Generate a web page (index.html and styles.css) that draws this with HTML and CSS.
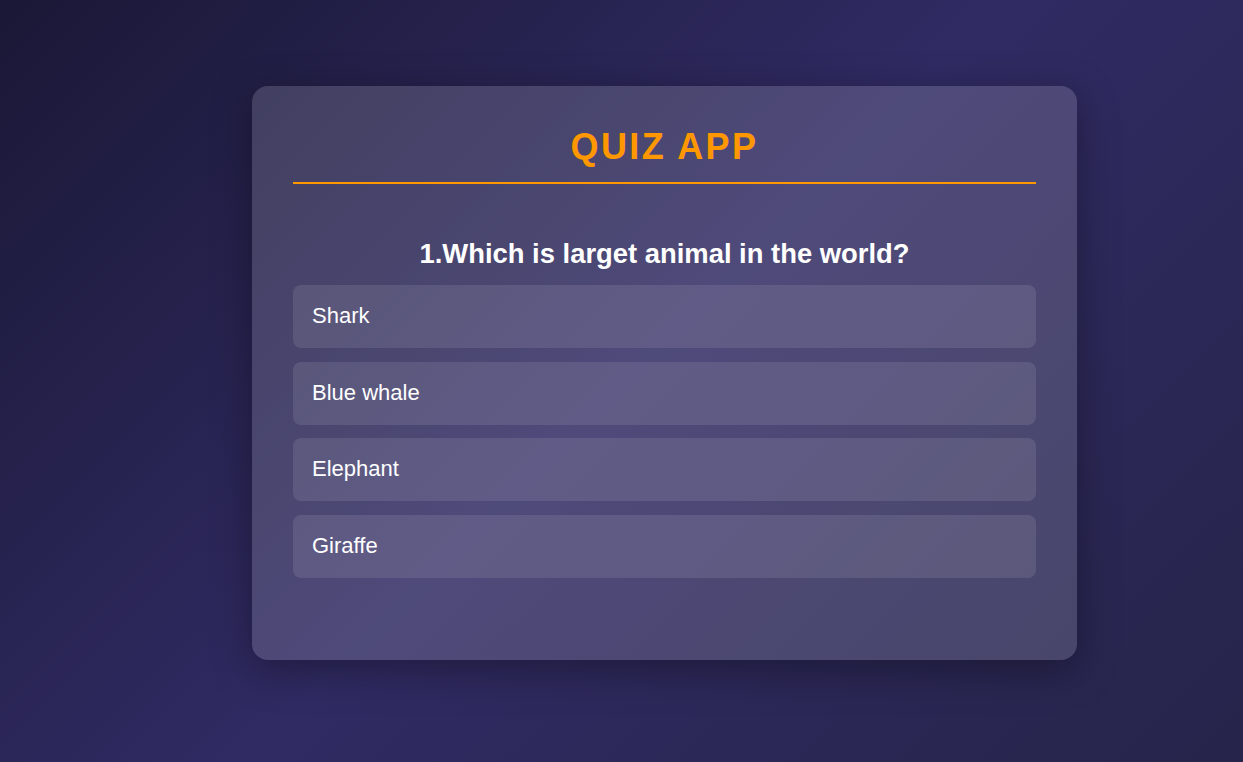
FILE: index.html
```html
<!DOCTYPE html>
<html lang="en">
<head>
<meta charset="UTF-8">
<title>Quiz App</title>
<link rel="stylesheet" href="styles.css">
</head>
<body>
  <main class="app">
    <h1 class="app-title">QUIZ APP</h1>
    <section class="quiz">
      <h2 class="question">1.Which is larget animal in the world?</h2>
      <div class="answers">
        <button class="answer">Shark</button>
        <button class="answer">Blue whale</button>
        <button class="answer">Elephant</button>
        <button class="answer">Giraffe</button>
      </div>
    </section>
  </main>
</body>
</html>
```

FILE: styles.css
```css
* {
  box-sizing: border-box;
}

html, body {
  height: 100%;
}

body {
  margin: 0;
  min-height: 100vh;
  font-family: "Liberation Sans", Arial, sans-serif;
  background: linear-gradient(135deg, #1a1836 0%, #302b63 50%, #26244a 100%);
  display: flex;
  justify-content: center;
  align-items: flex-start;
  padding: 86px 0 0 86px;
}

.app {
  width: 825px;
  background: rgba(255, 255, 255, 0.15);
  border-radius: 16px;
  padding: 40px 41px;
  box-shadow: 0 10px 40px rgba(0, 0, 0, 0.35);
}

.app-title {
  margin: 0;
  text-align: center;
  color: #ff9800;
  font-size: 36px;
  font-weight: 700;
  letter-spacing: 2.4px;
  padding-bottom: 14px;
  border-bottom: 2px solid #ff9800;
}

.quiz {
  padding-top: 54px;
  padding-bottom: 42px;
}

.question {
  margin: 0 0 15px;
  color: #ffffff;
  font-size: 27.4px;
  font-weight: 700;
  text-align: center;
}

.answers {
  display: flex;
  flex-direction: column;
  gap: 13.67px;
}

.answer {
  display: block;
  width: 100%;
  text-align: left;
  font-family: "Liberation Sans", Arial, sans-serif;
  font-size: 22px;
  line-height: 25px;
  color: #ffffff;
  background: rgba(255, 255, 255, 0.1);
  border: none;
  border-radius: 8px;
  padding: 18px 19px 20px;
  cursor: pointer;
}
```
